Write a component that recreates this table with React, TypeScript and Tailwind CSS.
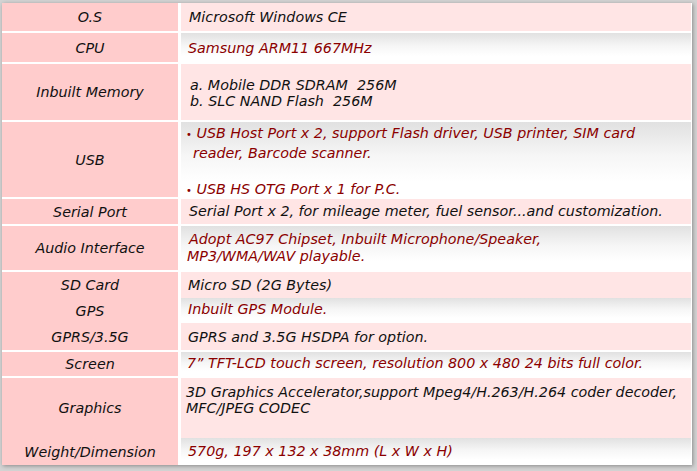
const font = { fontFamily: '"DejaVu Sans", Verdana, sans-serif' };

const PINK = "bg-[#ffe5e5]";
const GREY = "bg-[linear-gradient(to_bottom,#e1e1e1,#f6f6f6_45%,#ffffff_80%)]";

function Label({ h, children }: { h: string; children: React.ReactNode }) {
  return <div className={`${h} flex items-center justify-center pt-[2px] text-[#111]`}>{children}</div>;
}

function Cell({
  h,
  bg,
  red,
  className = "",
  children,
}: {
  h: string;
  bg: string;
  red?: boolean;
  className?: string;
  children: React.ReactNode;
}) {
  return (
    <div className={`${h} ${bg} ${red ? "text-[#8b0000]" : "text-[#111]"} ${className}`}>{children}</div>
  );
}

export default function App() {
  return (
    <div
      className="w-[697px] h-[471px] bg-[#d3d3d3] pt-[3px] pl-[2px] overflow-hidden italic text-[14.3px] whitespace-nowrap"
      style={font}
    >
      <div className="w-[690px] bg-white flex flex-col gap-[2px] shadow-[1px_1px_4px_rgba(0,0,0,0.35)]">
        {/* O.S */}
        <div className="flex gap-[3px]">
          <div className="w-[176px] bg-[#ffcccc]">
            <Label h="h-[28px]">O.S</Label>
          </div>
          <Cell h="h-[28px] w-[510px]" bg={PINK} className="flex items-center pl-[8px] pt-[2px]">
            Microsoft Windows CE
          </Cell>
        </div>

        {/* CPU */}
        <div className="flex gap-[3px]">
          <div className="w-[176px] bg-[#ffcccc]">
            <Label h="h-[29px]">CPU</Label>
          </div>
          <Cell h="h-[29px] w-[510px]" bg={GREY} red className="flex items-center pl-[7px] pt-[2px]">
            Samsung ARM11 667MHz
          </Cell>
        </div>

        {/* Memory */}
        <div className="flex gap-[3px]">
          <div className="w-[176px] bg-[#ffcccc]">
            <Label h="h-[56px]">Inbuilt Memory</Label>
          </div>
          <Cell h="h-[56px] w-[510px]" bg={PINK} className="flex flex-col justify-center pl-[9px] pt-[1px] leading-[16px] whitespace-pre">
            <div>a. Mobile DDR SDRAM  256M</div>
            <div>b. SLC NAND Flash  256M</div>
          </Cell>
        </div>

        {/* USB */}
        <div className="flex gap-[3px]">
          <div className="w-[176px] bg-[#ffcccc]">
            <Label h="h-[75px]">USB</Label>
          </div>
          <Cell h="h-[75px] w-[510px]" bg={GREY} red className="pt-[2px] pl-[5px] leading-[18px]">
            <div>
              <span className="text-[10px] not-italic">•</span> USB Host Port x 2, support Flash driver, USB printer, SIM card
            </div>
            <div className="pl-[7px]">reader, Barcode scanner.</div>
            <div>&nbsp;</div>
            <div>
              <span className="text-[10px] not-italic">•</span> USB HS OTG Port x 1 for P.C.
            </div>
          </Cell>
        </div>

        {/* Serial */}
        <div className="flex gap-[3px]">
          <div className="w-[176px] bg-[#ffcccc]">
            <Label h="h-[25px]">Serial Port</Label>
          </div>
          <Cell h="h-[25px] w-[510px]" bg={PINK} className="flex items-center pl-[8px] pt-[1px]">
            Serial Port x 2, for mileage meter, fuel sensor...and customization.
          </Cell>
        </div>

        {/* Audio */}
        <div className="flex gap-[3px]">
          <div className="w-[176px] bg-[#ffcccc]">
            <Label h="h-[44px]">Audio Interface</Label>
          </div>
          <Cell h="h-[44px] w-[510px]" bg={GREY} red className="flex flex-col justify-center pl-[6px] leading-[17px]">
            <div className="pl-[2px]">Adopt AC97 Chipset, Inbuilt Microphone/Speaker,</div>
            <div>MP3/WMA/WAV playable.</div>
          </Cell>
        </div>

        {/* SD / GPS / GPRS */}
        <div className="flex gap-[3px]">
          <div className="w-[176px] bg-[#ffcccc] flex flex-col">
            <Label h="h-[26px]">SD Card</Label>
            <Label h="h-[26px]">GPS</Label>
            <Label h="h-[26px]">GPRS/3.5G</Label>
          </div>
          <div className="w-[510px] flex flex-col">
            <Cell h="h-[26px]" bg={PINK} className="flex items-center pl-[7px] pt-[2px]">
              Micro SD (2G Bytes)
            </Cell>
            <Cell h="h-[25px]" bg={GREY} red className="flex items-center pl-[7px] pb-[1px]">
              Inbuilt GPS Module.
            </Cell>
            <Cell h="h-[27px]" bg={PINK} className="flex items-center pl-[7px] pt-[3px]">
              GPRS and 3.5G HSDPA for option.
            </Cell>
          </div>
        </div>

        {/* Screen */}
        <div className="flex gap-[3px]">
          <div className="w-[176px] bg-[#ffcccc]">
            <Label h="h-[24px]">Screen</Label>
          </div>
          <Cell h="h-[24px] w-[510px]" bg={GREY} red className="flex items-center pl-[6px]">
            7” TFT-LCD touch screen, resolution 800 x 480 24 bits full color.
          </Cell>
        </div>

        {/* Graphics / Weight */}
        <div className="flex gap-[3px]">
          <div className="w-[176px] bg-[#ffcccc] flex flex-col">
            <Label h="h-[60px]">Graphics</Label>
            <Label h="h-[27px]">Weight/Dimension</Label>
          </div>
          <div className="w-[510px] flex flex-col">
            <Cell h="h-[60px]" bg={PINK} className="pt-[6px] pl-[5px] leading-[16px]">
              <div>3D Graphics Accelerator,support Mpeg4/H.263/H.264 coder decoder,</div>
              <div>MFC/JPEG CODEC</div>
            </Cell>
            <Cell h="h-[27px]" bg={GREY} red className="flex items-center pl-[7px] pt-[1px]">
              570g, 197 x 132 x 38mm (L x W x H)
            </Cell>
          </div>
        </div>
      </div>
    </div>
  );
}
